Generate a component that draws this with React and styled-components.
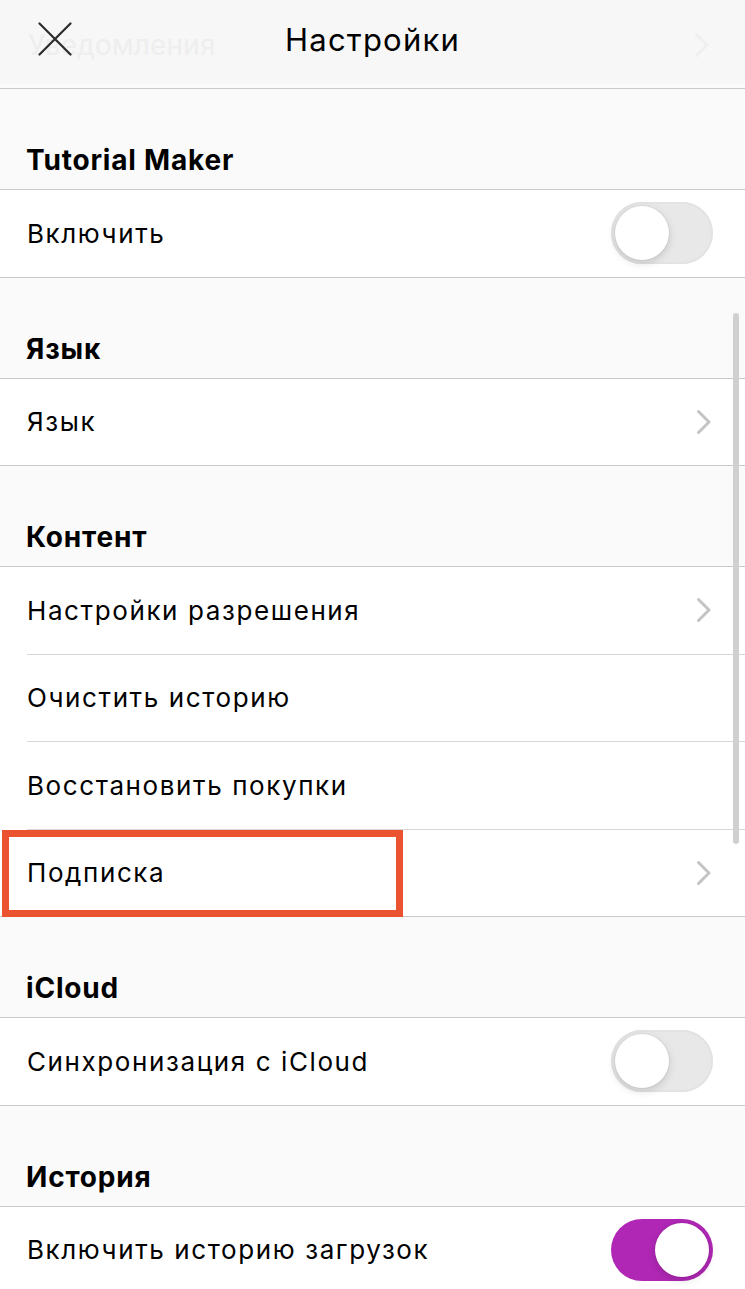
import React from "react";
import styled, { createGlobalStyle } from "styled-components";

const Global = createGlobalStyle`
  html, body { margin: 0; padding: 0; background: #fafafa; }
  body { font-family: Inter, "Noto Sans", sans-serif; color: #000; -webkit-font-smoothing: antialiased; }
  * { box-sizing: border-box; }
`;

const Page = styled.div`
  position: relative;
  width: 745px;
  height: 1289px;
  overflow: hidden;
  background: #fafafa;
`;

const Header = styled.header`
  position: relative;
  height: 84px;
  padding-bottom: 6px;
  background: #f7f7f7;
  display: grid;
  grid-template-columns: 1fr auto 1fr;
  align-items: center;
`;

const Ghost = styled.div`
  position: absolute;
  inset: 0;
  display: flex;
  align-items: center;
  justify-content: space-between;
  padding: 6px 34px 0 28px;
  font-size: 28px;
  letter-spacing: 0.2px;
  color: #eeeeee;
  pointer-events: none;
`;

const CloseButton = styled.button`
  justify-self: start;
  margin-left: 38px;
  width: 34px;
  height: 34px;
  padding: 0;
  border: 0;
  background: none;
  display: flex;
  position: relative;
`;

const Title = styled.h1`
  margin: 0;
  font-size: 31px;
  font-weight: 400;
  letter-spacing: 1.2px;
  color: #000;
  position: relative;
`;

const Gap = styled.div`
  height: 5px;
  border-bottom: 1px solid #c9c9c9;
`;

const SectionHead = styled.div`
  height: 101px;
  display: flex;
  align-items: flex-end;
  padding: 0 0 12px 26px;
  font-size: 28px;
  font-weight: 700;
  letter-spacing: 0.8px;
  line-height: 34px;
  border-bottom: 1px solid #c9c9c9;
`;

const List = styled.div`
  background: #fff;
  border-bottom: 1px solid #c9c9c9;
`;

const Row = styled.div`
  position: relative;
  height: ${(p) => (p.$last ? "86.5px" : "87.5px")};
  margin-left: 27px;
  padding-right: 32px;
  display: flex;
  align-items: center;
  justify-content: space-between;
  border-bottom: ${(p) => (p.$last ? "none" : "1px solid #d6d6d6")};
`;

const Label = styled.span`
  font-size: 26px;
  font-weight: 400;
  letter-spacing: 1.6px;
  color: #000;
`;

const Chevron = styled.svg`
  width: 16px;
  height: 26px;
  margin-right: 1px;
`;

const Track = styled.div`
  width: 102px;
  height: 62px;
  padding: 4px;
  border-radius: 31px;
  display: flex;
  justify-content: ${(p) => (p.$on ? "flex-end" : "flex-start")};
  background: ${(p) => (p.$on ? "#b027b5" : "#e8e8e8")};
  box-shadow: ${(p) => (p.$on ? "none" : "inset 0 0 0 2px #e3e3e3")};
`;

const Knob = styled.div`
  width: 54px;
  height: 54px;
  border-radius: 50%;
  background: #fff;
  box-shadow: 0 3px 8px rgba(0, 0, 0, 0.15), 0 0 0 1px rgba(0, 0, 0, 0.04);
`;

const Highlight = styled.div`
  position: absolute;
  left: -25px;
  top: 0;
  width: 401px;
  height: 87px;
  border: 7px solid #ea5230;
  pointer-events: none;
`;

const Scrollbar = styled.div`
  position: absolute;
  left: 733px;
  top: 313px;
  width: 6px;
  height: 531px;
  border-radius: 3px;
  background: #d0d0d0;
`;

const ChevronIcon = ({ color = "#c4c4c4" }) => (
  <Chevron viewBox="0 0 16 26">
    <path d="M2.5 2.5 L13 13 L2.5 23.5" fill="none" stroke={color} strokeWidth="3" strokeLinecap="round" strokeLinejoin="round" />
  </Chevron>
);

const Toggle = ({ on }) => (
  <Track $on={on}>
    <Knob />
  </Track>
);

const sections = [
  { title: "Tutorial Maker", rows: [{ label: "Включить", toggle: false }] },
  { title: "Язык", rows: [{ label: "Язык", chevron: true }] },
  {
    title: "Контент",
    rows: [
      { label: "Настройки разрешения", chevron: true },
      { label: "Очистить историю" },
      { label: "Восстановить покупки" },
      { label: "Подписка", chevron: true, highlight: true },
    ],
  },
  { title: "iCloud", rows: [{ label: "Синхронизация с iCloud", toggle: false }] },
  { title: "История", rows: [{ label: "Включить историю загрузок", toggle: true }] },
];

export default function App() {
  return (
    <Page>
      <Global />
      <Header>
        <Ghost>
          <span>Уведомления</span>
          <ChevronIcon color="#efefef" />
        </Ghost>
        <CloseButton aria-label="close">
          <svg width="34" height="34" viewBox="0 0 34 34">
            <path d="M1.5 1.5 L32.5 32.5 M32.5 1.5 L1.5 32.5" stroke="#2b2b2b" strokeWidth="2.2" strokeLinecap="round" />
          </svg>
        </CloseButton>
        <Title>Настройки</Title>
        <span />
      </Header>
      <Gap />
      {sections.map((s) => (
        <section key={s.title}>
          <SectionHead>{s.title}</SectionHead>
          <List>
            {s.rows.map((r, i) => (
              <Row key={r.label} $last={i === s.rows.length - 1}>
                <Label>{r.label}</Label>
                {r.chevron && <ChevronIcon />}
                {r.toggle !== undefined && <Toggle on={r.toggle} />}
                {r.highlight && <Highlight />}
              </Row>
            ))}
          </List>
        </section>
      ))}
      <Scrollbar />
    </Page>
  );
}
